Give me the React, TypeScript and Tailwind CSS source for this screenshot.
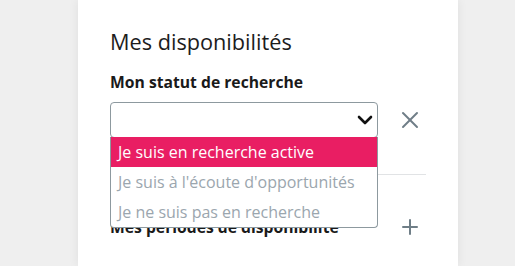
import { ChevronDown, Plus, X } from 'lucide-react';

const options = [
  'Je suis en recherche active',
  "Je suis à l'écoute d'opportunités",
  'Je ne suis pas en recherche',
];

export default function App() {
  return (
    <div className="h-[266px] w-[515px] overflow-hidden bg-[#efefef] font-['Open_Sans',sans-serif]">
      <div className="ml-[78px] h-full w-[380px] bg-white px-8 pt-[28px] shadow-[0_0_10px_rgba(0,0,0,0.07)]">
        <h2 className="text-[21.7px] leading-[28px] text-[#1c1c1c]">Mes disponibilités</h2>

        <div className="border-b border-[#e1e3e5] pb-[36px]">
          <label className="mt-[15px] block text-[15.7px] font-bold leading-[22px] text-[#1a1a1a]">
            Mon statut de recherche
          </label>
          <div className="mt-[9px] flex items-center">
            <div className="relative h-[36px] w-[268px]">
              <div className="flex h-full items-center justify-end rounded-[4px] border border-[#8d999f]">
                <ChevronDown size={24} strokeWidth={2.6} className="text-[#111]" />
              </div>
              <ul className="absolute left-0 top-[35px] z-10 w-full rounded-b-[4px] border border-t-0 border-[#8d999f] bg-white">
                {options.map((o, i) => (
                  <li
                    key={o}
                    className={
                      i === 0
                        ? 'flex h-[30px] items-center bg-[#e91e63] pl-[7px] text-[16px] text-white'
                        : 'flex h-[30px] items-center pl-[7px] text-[16px] text-[#9ba6ae]'
                    }
                  >
                    {o}
                  </li>
                ))}
              </ul>
            </div>
            <X size={28} strokeWidth={1.7} className="ml-[18px] text-[#6f7e87]" />
          </div>
        </div>

        <div className="flex items-center justify-between pt-[40px]">
          <span className="text-[15.7px] font-bold leading-[22px] text-[#1a1a1a]">
            Mes périodes de disponibilité
          </span>
          <Plus size={24} strokeWidth={2} className="mr-[4px] text-[#6f7e87]" />
        </div>
      </div>
    </div>
  );
}
